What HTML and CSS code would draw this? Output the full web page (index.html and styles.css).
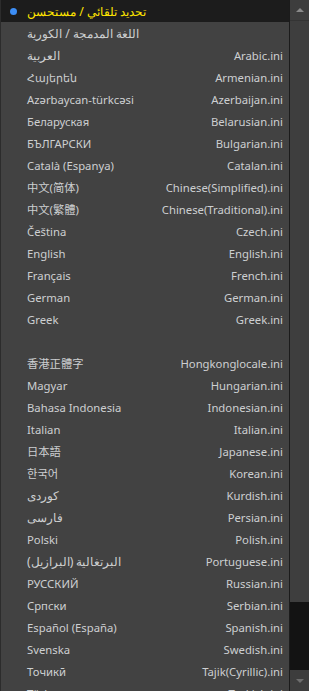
FILE: index.html
```html
<!DOCTYPE html>
<html lang="en">
<head>
  <meta charset="UTF-8">
  <title>Language menu</title>
  <link rel="stylesheet" href="styles.css">
</head>
<body>

<div class="popup">
  <ul class="menu">
    <li class="item current"><span class="dot"></span><span class="name arabic">تحديد تلقائي / مستحسن</span></li>
    <li class="item"><span class="name arabic">اللغة المدمجة / الكورية</span></li>
    <li class="item"><span class="name arabic">العربية</span><span class="file">Arabic.ini</span></li>
    <li class="item"><span class="name">Հայերեն</span><span class="file">Armenian.ini</span></li>
    <li class="item"><span class="name">Azərbaycan-türkcəsi</span><span class="file">Azerbaijan.ini</span></li>
    <li class="item"><span class="name">Беларуская</span><span class="file">Belarusian.ini</span></li>
    <li class="item"><span class="name">БЪЛГАРСКИ</span><span class="file">Bulgarian.ini</span></li>
    <li class="item"><span class="name">Català (Espanya)</span><span class="file">Catalan.ini</span></li>
    <li class="item"><span class="name">中文(简体)</span><span class="file">Chinese(Simplified).ini</span></li>
    <li class="item"><span class="name">中文(繁體)</span><span class="file">Chinese(Traditional).ini</span></li>
    <li class="item"><span class="name">Čeština</span><span class="file">Czech.ini</span></li>
    <li class="item"><span class="name">English</span><span class="file">English.ini</span></li>
    <li class="item"><span class="name">Français</span><span class="file">French.ini</span></li>
    <li class="item"><span class="name">German</span><span class="file">German.ini</span></li>
    <li class="item"><span class="name">Greek</span><span class="file">Greek.ini</span></li>
    <li class="item"></li>
    <li class="item"><span class="name">香港正體字</span><span class="file">Hongkonglocale.ini</span></li>
    <li class="item"><span class="name">Magyar</span><span class="file">Hungarian.ini</span></li>
    <li class="item"><span class="name">Bahasa Indonesia</span><span class="file">Indonesian.ini</span></li>
    <li class="item"><span class="name">Italian</span><span class="file">Italian.ini</span></li>
    <li class="item"><span class="name">日本語</span><span class="file">Japanese.ini</span></li>
    <li class="item"><span class="name">한국어</span><span class="file">Korean.ini</span></li>
    <li class="item"><span class="name arabic">کوردی</span><span class="file">Kurdish.ini</span></li>
    <li class="item"><span class="name arabic">فارسی</span><span class="file">Persian.ini</span></li>
    <li class="item"><span class="name">Polski</span><span class="file">Polish.ini</span></li>
    <li class="item"><span class="name arabic">البرتغالية (البرازيل)</span><span class="file">Portuguese.ini</span></li>
    <li class="item"><span class="name">РУССКИЙ</span><span class="file">Russian.ini</span></li>
    <li class="item"><span class="name">Српски</span><span class="file">Serbian.ini</span></li>
    <li class="item"><span class="name">Español (España)</span><span class="file">Spanish.ini</span></li>
    <li class="item"><span class="name">Svenska</span><span class="file">Swedish.ini</span></li>
    <li class="item"><span class="name">Точикӣ</span><span class="file">Tajik(Cyrillic).ini</span></li>
    <li class="item"><span class="name">Türkçe</span><span class="file">Turkish.ini</span></li>
  </ul>

  <div class="scrollbar">
    <div class="arrow up"></div>
    <div class="thumb"></div>
    <div class="track"></div>
    <div class="arrow down"></div>
  </div>
</div>

</body>
</html>
```

FILE: styles.css
```css
body {
  margin: 0;
  background-color: #121212;
  font-family: "Noto Sans", "Noto Sans CJK SC", sans-serif;
  font-size: 11.3px;
}

.popup {
  display: flex;
  width: 309px;
  height: 691px;
  overflow: hidden;
}

.menu {
  list-style: none;
  margin: 0;
  padding: 0;
  width: 288px;
  background: #424242;
  border-left: 1px solid #2c2c2c;
  border-right: 1px solid #1b1b1b;
}

.item {
  display: flex;
  align-items: center;
  justify-content: space-between;
  height: 22px;
  padding: 0 6px 0 26px;
  color: #cdcfd1;
  white-space: nowrap;
  position: relative;
}

.item .arabic {
  font-size: 12.2px;
}

.item.current {
  background: #1c1c1c;
  color: #ffe400;
  justify-content: flex-start;
}

.dot {
  position: absolute;
  left: 9px;
  top: 8px;
  width: 7px;
  height: 7px;
  border-radius: 50%;
  background: #3d8ef5;
}

.scrollbar {
  display: flex;
  flex-direction: column;
  width: 19px;
  background: #3b3b3b;
}

.arrow {
  height: 20px;
  display: flex;
  align-items: center;
  justify-content: center;
  background: #3d3d3d;
}

.arrow::after {
  content: "";
  border-left: 4px solid transparent;
  border-right: 4px solid transparent;
}

.arrow.up {
  border-bottom: 1px solid #343434;
}

.arrow.up::after {
  border-bottom: 4px solid #8a8a8a;
}

.arrow.down {
  height: 21px;
}

.arrow.down::after {
  border-top: 4px solid #6e6e6e;
}

.thumb {
  height: 581px;
  background: #3e3e3e;
}

.track {
  flex: 1;
  background: #131313;
}
```
